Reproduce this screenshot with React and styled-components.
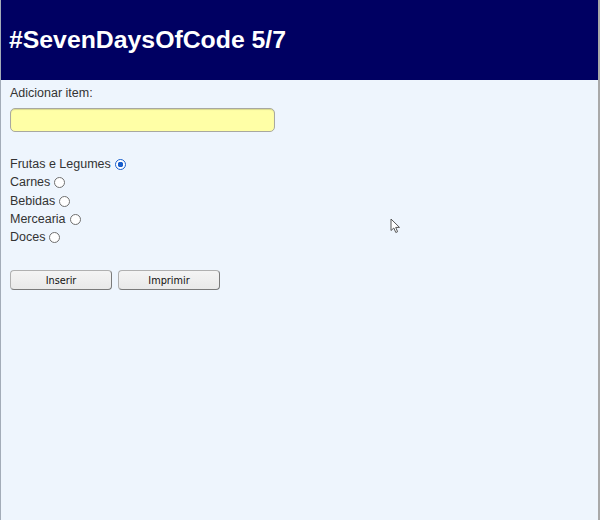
import styled, { createGlobalStyle } from "styled-components";

const GlobalStyle = createGlobalStyle`
  html, body {
    margin: 0;
    padding: 0;
    background: #eef5fd;
  }
`;

const categorias = ["Frutas e Legumes", "Carnes", "Bebidas", "Mercearia", "Doces"];

const App = () => {
  return (
    <Page>
      <GlobalStyle />
      <Header>
        <h1>#SevenDaysOfCode 5/7</h1>
      </Header>

      <Form>
        <Label htmlFor="item">Adicionar item:</Label>
        <ItemInput id="item" type="text" />

        <Categories>
          {categorias.map((c, i) => (
            <Option key={c}>
              {c}
              <Radio type="radio" name="categoria" defaultChecked={i === 0} />
            </Option>
          ))}
        </Categories>

        <Actions>
          <Button type="button">Inserir</Button>
          <Button type="button">Imprimir</Button>
        </Actions>
      </Form>

      <Cursor width="11" height="16" viewBox="0 0 11 16">
        <path
          d="M1 1 L1 12.5 L3.8 10 L5.8 14.5 L7.6 13.7 L5.7 9.4 L9.5 9.4 Z"
          fill="#fff"
          stroke="#555"
          strokeWidth="1"
          strokeLinejoin="round"
        />
      </Cursor>
    </Page>
  );
};

const Page = styled.div`
  position: relative;
  box-sizing: border-box;
  width: 600px;
  height: 520px;
  background: #eef5fd;
  border-left: 1px solid #a3acb8;
  border-right: 2px solid #a9a9a9;
  font-family: "Liberation Sans", Arial, sans-serif;
  color: #333;
  overflow: hidden;
`;

const Header = styled.header`
  height: 80px;
  margin-left: -1px;
  background: #000062;
  display: flex;
  align-items: center;
  padding-left: 9px;

  h1 {
    margin: 0;
    color: #ffffff;
    font-size: 24.8px;
    font-weight: 700;
  }
`;

const Form = styled.form`
  display: flex;
  flex-direction: column;
  align-items: flex-start;
  padding: 5px 9px;
`;

const Label = styled.label`
  font-size: 12.5px;
  line-height: 16px;
`;

const ItemInput = styled.input`
  box-sizing: border-box;
  width: 265px;
  height: 24px;
  margin: 7px 0 0;
  background: #ffffa6;
  border: 1px solid #a8a8a0;
  border-radius: 5px;
  box-shadow: inset 0 1px 1px rgba(0, 0, 0, 0.15);
  outline: none;
`;

const Categories = styled.div`
  display: flex;
  flex-direction: column;
  margin-top: 23px;
`;

const Option = styled.label`
  display: flex;
  align-items: center;
  height: 18.3px;
  font-size: 12.5px;
`;

const Radio = styled.input`
  appearance: none;
  box-sizing: border-box;
  width: 11px;
  height: 11px;
  margin: 1px 0 0 4px;
  border: 1px solid #6f6f6f;
  border-radius: 50%;
  background: #ffffff;

  &:checked {
    border: 1.5px solid #1a5fcc;
    background: radial-gradient(circle, #1a5fcc 0 2.6px, #ffffff 3px);
  }
`;

const Actions = styled.div`
  display: flex;
  gap: 6px;
  margin-top: 24px;
`;

const Button = styled.button`
  box-sizing: border-box;
  width: 102px;
  height: 20px;
  padding: 0;
  font-family: "DejaVu Sans Condensed", "DejaVu Sans", Tahoma, sans-serif;
  font-size: 10.8px;
  color: #111;
  background: linear-gradient(#f4f4f4, #e9e9e9);
  border: 1px solid #b0b0b0;
  border-right-color: #7a7a7a;
  border-bottom-color: #7a7a7a;
  border-radius: 4px;
`;

const Cursor = styled.svg`
  position: absolute;
  left: 389px;
  top: 218px;
`;

export default App;
